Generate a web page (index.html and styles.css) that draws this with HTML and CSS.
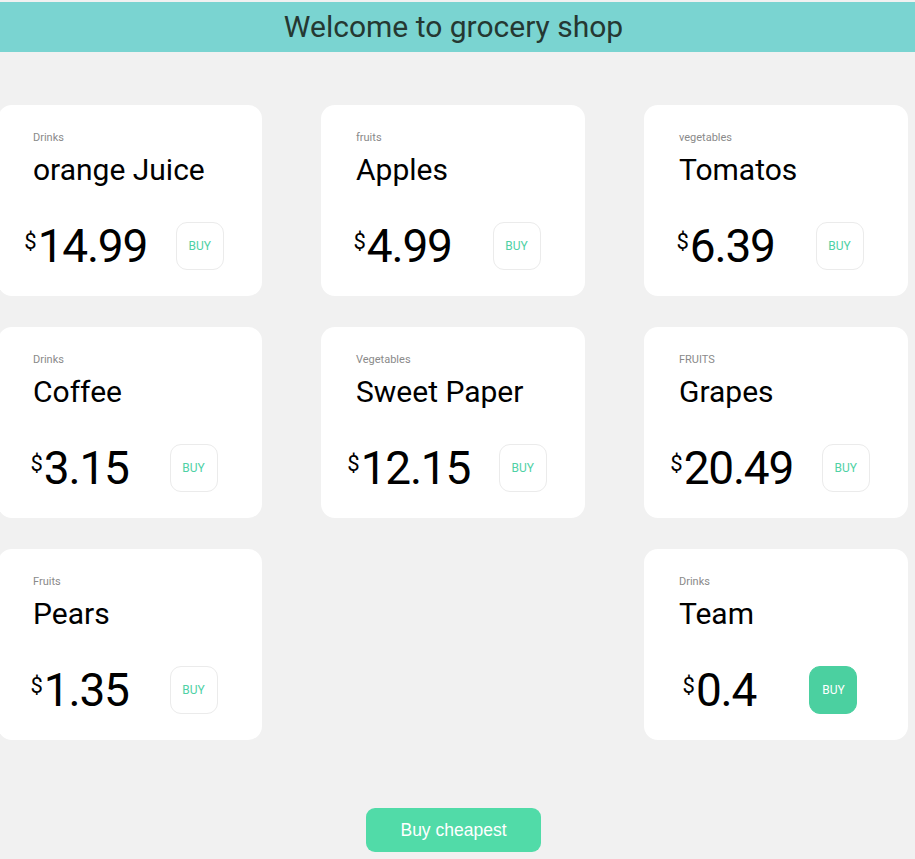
FILE: index.html
```html
<!DOCTYPE html>
<html>
<head>
<meta charset="utf-8">
<link rel="stylesheet" href="styles.css">
</head>
<body>
<header class="banner"><h1 class="title">Welcome to grocery shop</h1></header>
<main class="grid">
  <div class="card">
    <div class="cat">Drinks</div>
    <div class="name">orange Juice</div>
    <div class="row"><div class="price"><span class="cur">$</span>14.99</div><button class="buy">BUY</button></div>
  </div>
  <div class="card">
    <div class="cat">fruits</div>
    <div class="name">Apples</div>
    <div class="row"><div class="price"><span class="cur">$</span>4.99</div><button class="buy">BUY</button></div>
  </div>
  <div class="card">
    <div class="cat">vegetables</div>
    <div class="name">Tomatos</div>
    <div class="row"><div class="price"><span class="cur">$</span>6.39</div><button class="buy">BUY</button></div>
  </div>
  <div class="card">
    <div class="cat">Drinks</div>
    <div class="name">Coffee</div>
    <div class="row"><div class="price"><span class="cur">$</span>3.15</div><button class="buy">BUY</button></div>
  </div>
  <div class="card">
    <div class="cat">Vegetables</div>
    <div class="name">Sweet Paper</div>
    <div class="row"><div class="price"><span class="cur">$</span>12.15</div><button class="buy">BUY</button></div>
  </div>
  <div class="card">
    <div class="cat">FRUITS</div>
    <div class="name">Grapes</div>
    <div class="row"><div class="price"><span class="cur">$</span>20.49</div><button class="buy">BUY</button></div>
  </div>
  <div class="card">
    <div class="cat">Fruits</div>
    <div class="name">Pears</div>
    <div class="row"><div class="price"><span class="cur">$</span>1.35</div><button class="buy">BUY</button></div>
  </div>
  <div class="card empty"></div>
  <div class="card">
    <div class="cat">Drinks</div>
    <div class="name">Team</div>
    <div class="row"><div class="price"><span class="cur">$</span>0.4</div><button class="buy active">BUY</button></div>
  </div>
</main>
<footer class="foot"><button class="cheapest">Buy cheapest</button></footer>
</body>
</html>
```
FILE: styles.css
```css
html, body {
  margin: 0;
  padding: 0;
  background: #f1f1f1;
  font-family: Roboto, "Liberation Sans", sans-serif;
}
body {
  padding-top: 2px;
  width: 915px;
  height: 857px;
  overflow: hidden;
}
.banner {
  background: #7ad4d1;
  height: 50px;
  display: flex;
  align-items: center;
  justify-content: center;
  padding-right: 8px;
}
.title {
  margin: 0;
  font-weight: 400;
  font-size: 30px;
  color: #253832;
  line-height: 50px;
}
.grid {
  display: grid;
  grid-template-columns: repeat(3, 264px);
  grid-auto-rows: 191px;
  column-gap: 59px;
  row-gap: 31px;
  margin-top: 53px;
  margin-left: -2px;
}
.card {
  background: #fff;
  border-radius: 14px;
  padding-top: 26px;
  box-sizing: border-box;
}
.card.empty {
  visibility: hidden;
}
.cat {
  margin-left: 35px;
  font-size: 11px;
  line-height: 13px;
  color: #8a8a8a;
}
.name {
  margin-left: 35px;
  margin-top: 9px;
  font-size: 30px;
  line-height: 34px;
  color: #000;
}
.row {
  margin-top: 35px;
  margin-left: 12px;
  width: 228px;
  display: flex;
  align-items: center;
  justify-content: space-around;
}
.price {
  font-size: 46px;
  line-height: 48px;
  letter-spacing: -1.2px;
  color: #000;
  display: flex;
  align-items: flex-start;
}
.cur {
  font-size: 22px;
  line-height: 28px;
  margin-top: 6px;
  margin-right: 1px;
  letter-spacing: 0;
}
.buy {
  width: 48px;
  height: 48px;
  border: 1px solid #ebebeb;
  border-radius: 11px;
  background: #fff;
  color: #4fd1a5;
  font-family: Roboto, sans-serif;
  font-size: 12px;
  padding: 0;
}
.buy.active {
  background: #4bd0a0;
  border-color: #4bd0a0;
  color: #fff;
}
.foot {
  display: flex;
  justify-content: center;
  margin-top: 68px;
  padding-right: 8px;
}
.cheapest {
  width: 175px;
  height: 44px;
  border: none;
  border-radius: 9px;
  background: #51dba8;
  color: #fff;
  font-family: "Liberation Sans", Arial, sans-serif;
  font-size: 17.5px;
  padding: 0;
}
```
